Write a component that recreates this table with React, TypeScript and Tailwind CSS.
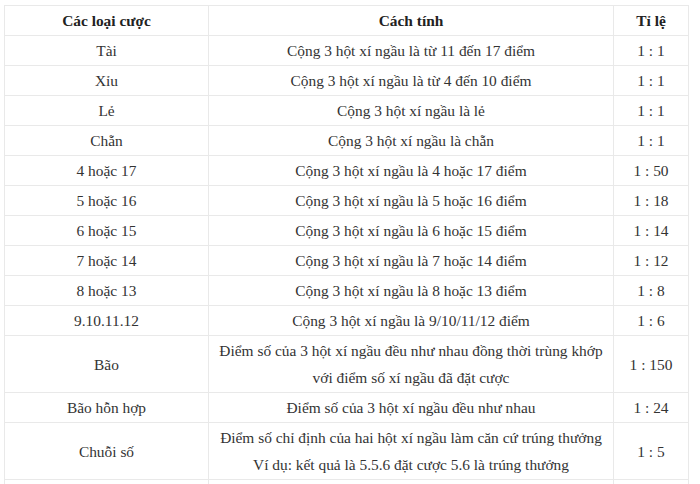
const rows: [string, string[], string][] = [
  ["Tài", ["Cộng 3 hột xí ngầu là từ 11 đến 17 điểm"], "1 : 1"],
  ["Xỉu", ["Cộng 3 hột xí ngầu là từ 4 đến 10 điểm"], "1 : 1"],
  ["Lẻ", ["Cộng 3 hột xí ngầu là lẻ"], "1 : 1"],
  ["Chẵn", ["Cộng 3 hột xí ngầu là chẵn"], "1 : 1"],
  ["4 hoặc 17", ["Cộng 3 hột xí ngầu là 4 hoặc 17 điểm"], "1 : 50"],
  ["5 hoặc 16", ["Cộng 3 hột xí ngầu là 5 hoặc 16 điểm"], "1 : 18"],
  ["6 hoặc 15", ["Cộng 3 hột xí ngầu là 6 hoặc 15 điểm"], "1 : 14"],
  ["7 hoặc 14", ["Cộng 3 hột xí ngầu là 7 hoặc 14 điểm"], "1 : 12"],
  ["8 hoặc 13", ["Cộng 3 hột xí ngầu là 8 hoặc 13 điểm"], "1 : 8"],
  ["9.10.11.12", ["Cộng 3 hột xí ngầu là 9/10/11/12 điểm"], "1 : 6"],
  [
    "Bão",
    [
      "Điểm số của 3 hột xí ngầu đều như nhau đồng thời trùng khớp",
      "với điểm số xí ngầu đã đặt cược",
    ],
    "1 : 150",
  ],
  ["Bão hỗn hợp", ["Điểm số của 3 hột xí ngầu đều như nhau"], "1 : 24"],
  [
    "Chuỗi số",
    [
      "Điểm số chỉ định của hai hột xí ngầu làm căn cứ trúng thưởng",
      "Ví dụ: kết quả là 5.5.6 đặt cược 5.6 là trúng thưởng",
    ],
    "1 : 5",
  ],
];

const cell = "border border-[#e9e9e9] px-2 py-[1px] text-center align-middle";

export default function App() {
  return (
    <div className="min-h-screen bg-white pl-[4px] pt-[5px] [font-family:'Liberation_Serif',serif] text-[15.4px] leading-[27px] text-[#333]">
      <table className="w-[684px] table-fixed border-collapse">
        <colgroup>
          <col className="w-[204px]" />
          <col className="w-[405px]" />
          <col className="w-[75px]" />
        </colgroup>
        <thead>
          <tr>
            <th className={`${cell} font-bold text-[#222]`}>Các loại cược</th>
            <th className={`${cell} font-bold text-[#222]`}>Cách tính</th>
            <th className={`${cell} font-bold text-[#222]`}>Tỉ lệ</th>
          </tr>
        </thead>
        <tbody>
          {rows.map(([name, desc, rate]) => (
            <tr key={name}>
              <td className={cell}>{name}</td>
              <td className={`${cell} whitespace-nowrap`}>
                {desc.map((line) => (
                  <div key={line}>{line}</div>
                ))}
              </td>
              <td className={cell}>{rate}</td>
            </tr>
          ))}
          <tr>
            <td className={`${cell} h-[30px]`} />
            <td className={cell} />
            <td className={cell} />
          </tr>
        </tbody>
      </table>
    </div>
  );
}
